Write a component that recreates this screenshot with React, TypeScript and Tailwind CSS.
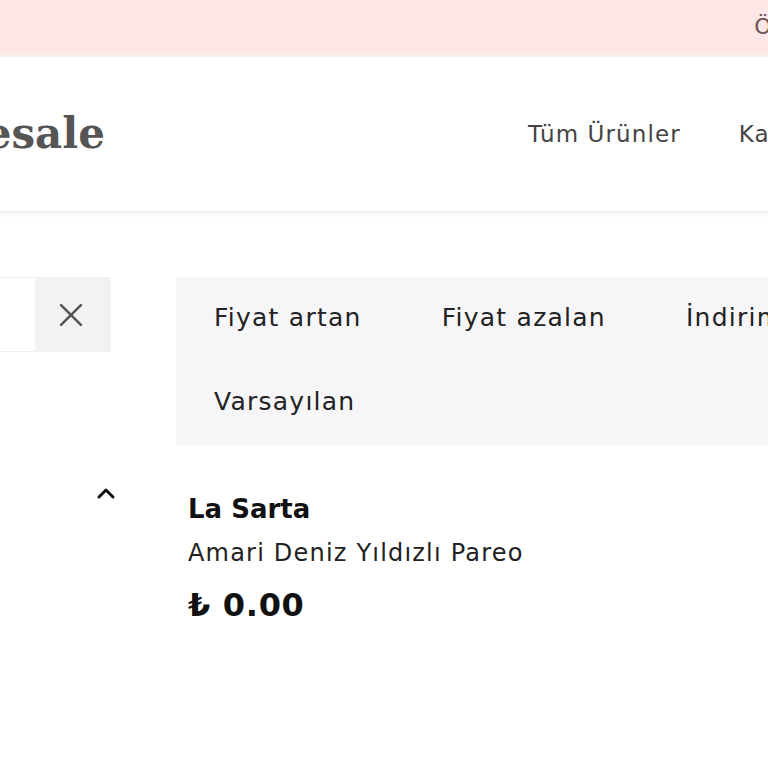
import React from "react";

export default function App() {
  const sans = { fontFamily: '"DejaVu Sans", "Noto Sans", sans-serif' };
  return (
    <div className="w-[768px] h-[768px] overflow-hidden bg-white" style={sans}>
      {/* top bar */}
      <div className="h-[53px] bg-[#fde6e6] flex justify-end items-center">
        <span className="text-[22px] text-[#6b5757] mr-[-66px] whitespace-nowrap">Ödeme</span>
      </div>
      <div className="h-[4px] bg-[#fbeeea]" />
      {/* header */}
      <div className="h-[156px] flex items-center border-b-2 border-[#efefef] shadow-[0_2px_4px_rgba(0,0,0,0.04)]">
        <div className="w-[105px] flex justify-end whitespace-nowrap shrink-0">
          <span
            className="text-[42px] font-bold text-[#555555] leading-none"
            style={{ fontFamily: '"DejaVu Serif", "Liberation Serif", serif' }}
          >
            Wholesale
          </span>
        </div>
        <nav className="ml-[423px] flex items-center gap-[58px] whitespace-nowrap text-[23px] tracking-[1.1px] text-[#444444]">
          <span>Tüm Ürünler</span>
          <span>Kategoriler</span>
        </nav>
      </div>
      {/* main */}
      <div className="flex pt-[64px]">
        <div className="w-[176px] shrink-0">
          <div className="flex h-[75px]">
            <div className="w-[35px] border-y border-[#ededed] bg-white" />
            <div className="w-[76px] bg-[#f2f2f2] flex items-center justify-center pr-[4px]">
              <svg width="34" height="34" viewBox="0 0 24 24" fill="none" stroke="#555" strokeWidth="1.8" strokeLinecap="round">
                <path d="M5 5L19 19M19 5L5 19" />
              </svg>
            </div>
          </div>
          <div className="flex mt-[134px] ml-[96px]">
            <svg width="20" height="14" viewBox="0 0 20 14" fill="none" stroke="#111" strokeWidth="3" strokeLinecap="round" strokeLinejoin="round">
              <path d="M3 11L10 4L17 11" />
            </svg>
          </div>
        </div>
        <div className="flex-1 min-w-0">
          <div className="h-[168px] w-[640px] bg-[#f6f6f8] pl-[38px] pt-[21px] text-[25px] tracking-[1.25px] text-[#222222] whitespace-nowrap">
            <div className="flex gap-[80px] h-[40px] items-center">
              <span>Fiyat artan</span>
              <span>Fiyat azalan</span>
              <span>İndirimli</span>
            </div>
            <div className="flex h-[40px] items-center mt-[44px]">
              <span>Varsayılan</span>
            </div>
          </div>
          <div className="pl-[12px] pt-[46px] text-[#111111] whitespace-nowrap">
            <div className="text-[26px] font-bold leading-[36px]">La Sarta</div>
            <div className="text-[24px] tracking-[1.2px] leading-[36px] mt-[8px] text-[#222222]">Amari Deniz Yıldızlı Pareo</div>
            <div className="text-[32px] tracking-[0.7px] font-bold leading-[44px] mt-[12px]">₺ 0.00</div>
          </div>
        </div>
      </div>
    </div>
  );
}
